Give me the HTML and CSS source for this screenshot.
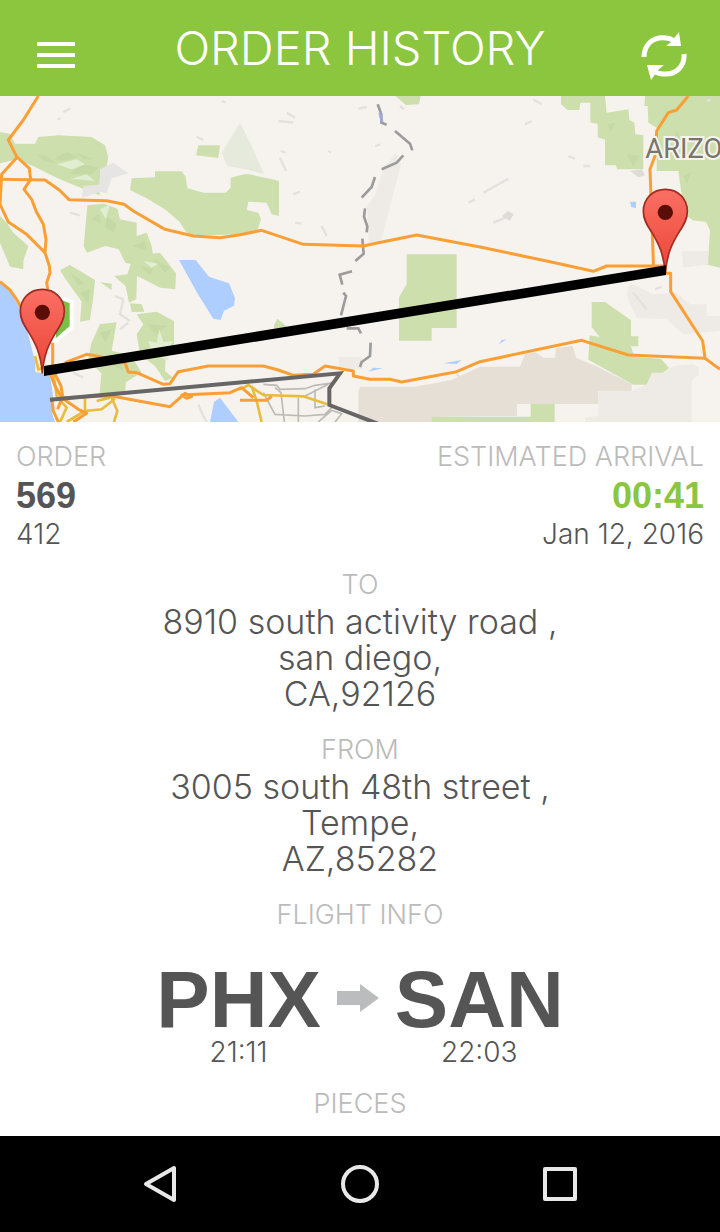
FILE: index.html
```html
<!DOCTYPE html>
<html lang="en">
<head>
    <meta charset="UTF-8">
    <meta name="viewport" content="width=device-width, initial-scale=1.0">
    <title>Order History</title>
    <link rel="stylesheet" href="styles.css">
</head>
<body>
    <header class="topbar">
        <button class="icon-btn" type="button" aria-label="Menu">
            <svg width="38" height="28" viewBox="0 0 38 28"><path d="M0 2h38M0 13h38M0 24h38" stroke="#fff" stroke-width="4"/></svg>
        </button>
        <h1>ORDER HISTORY</h1>
        <button class="icon-btn" type="button" aria-label="Refresh">
            <svg width="46" height="48" viewBox="0 0 46 48">
                <path d="M3 25C3 12 13 4 25 6c4 0 7 2 9 4" fill="none" stroke="#fff" stroke-width="5"/>
                <path d="M38 0l2 14H25l5-4z" fill="#fff"/>
                <path d="M43 22c1 12-8 21-20 20-5 0-8-1-11-4" fill="none" stroke="#fff" stroke-width="5"/>
                <path d="M6 33h17l-6 5-7 10z" fill="#fff"/>
            </svg>
        </button>
    </header>

    <main>
        <svg class="map" viewBox="0 0 2160 978" role="img" aria-label="Flight route map">
            <defs>
                <linearGradient id="pin-fill" x1="0" y1="0" x2="0" y2="1">
                    <stop offset="0" stop-color="#fb7064"/>
                    <stop offset="1" stop-color="#ea4335"/>
                </linearGradient>
                <g id="pin">
                    <path d="M0 0C-5-60-20-88-40-122C-58-148-66-164-66-186C-66-224-38-252 0-252S66-224 66-186C66-164 58-148 40-122C20-88 5-60 0 0z" fill="url(#pin-fill)" stroke="#a02c22" stroke-width="5"/>
                    <circle cy="-183" r="23" fill="#5b0d08"/>
                </g>
            </defs>
            <rect width="2160" height="978" fill="#f6f3ef"/>

            <!-- parks -->
            <g fill="#cddfad">
                <path d="M0 108l30 5 15 30 60 0 10-20 60-5 100 5 40 25 10 35-8 45-18 20v50l-50-20-50-20-40-18-60-30-50-20-49 12z"/>
                <path d="M262 328l50-5 40 15 8 32 50 10v40l30-10 15 40 5 30 20 15-2 30-102-25-20-40-40-10-55 20-10-20z"/>
                <path d="M395 247l70-3v-18h80l12 16 5 35 50 13h65l15-15v-30l40-10h15l70 15 20 5v105l-22-5-15-35-55-3-5 25 35 8 8 20-10 30-40 14-158 6-15-10-22-33-40-35-58-35-50-25z"/>
                <path d="M595 148h65l-5 38-67-8z"/>
                <path d="M0 360l20 20 20 30 45 40-15 45v25l-40-8-30-72z"/>
                <path d="M180 522l30-15 75 45-5 50-10 70-30 5 5-60-50-70z"/>
                <path d="M400 480l80-10 48 62-2 48-45-5-50-25-20-10-2 70-22 10-10-50-35-30 40-5z"/>
                <path d="M390 622l35 3 8 22-38 1zM300 558l35 5v20z"/>
                <path d="M300 684l50-5-15 85 40 10 30 25 20 30-47 30-4 38-75-5 5-60-40-40 10-50z"/>
                <path d="M410 655l60-8 52 28v90l-25 20-2 40 25 20-25 10-30-45-45-35-10-60 20-30z"/>
                <path d="M822 688l10-20 30 25-40 5z"/>
                <path d="M1220 475h150v221h-75v38h-98v-130l23-40zM1187 0h75l-5 25-40 2z"/>
                <path d="M1683 0h132l5 50 65-10 3 32 15 8 3 35 24 2v103h-78l-5-12h-32v-77l-22-7v-40l-22-5V20h-30l-3 22h-35l-20-17z"/>
                <path d="M1935 0h225v515l-50-12 15-20 5-80-12-25-40-5-25-20-18-128h-65V95l-25-15-2-50h-10z"/>
                <path d="M1775 618h40l78 55v48h22v30h-22l10 32 80 5 24 28-25 20-30 3-12 27h-40l-135-75 4-73 30 5-24-30z"/>
            </g>
            <!-- hill shading -->
            <g fill="#b8cf98" opacity=".4">
                <path d="M160 190l40-22 40 14-50 12zM205 235l45-30 45 10-20 20zM110 175l35 8 18 18-30-5zM230 170l50 20-30 0zM275 370l22-18 5 28zM320 360l30 25-10 25-25-18zM400 450l35-15 5 30zM210 530l45 30-20 8zM240 590l30-10-5 45zM420 510l40 10-10 18zM460 490l50 25-15 15zM300 710l35-10-18 38zM330 800l35-15 5 40zM440 685l60 5-30 25zM1825 85l22-5-15 28zM1880 175l40 5-20 30zM2030 100l12 30-22 5zM2085 130l16 10-18 20zM2050 240l25-12-15 35z"/>
            </g>
            <g fill="#e2eed2">
                <path d="M170 205l60-15 25 15-40 15zM210 250l50-15 25 20-55-5zM300 340l30-15-12 45zM430 495l45 8-20 12zM445 735l25 5 8-40 12 38 30-3-18 30 5 30-35-15-35 10 15-32z"/>
            </g>
            <path d="M665 170l55-90 40 80 32 75-55-15-55-10z" fill="#e5eadc"/>

            <!-- plains and desert -->
            <path d="M1150 220l38-50 15 35-55 210-5 22-37 5-5-110 25-37zM1017 783h70v35h-70z" fill="#eeebe6"/>
            <path d="M1080 872h165l110-20 85-40h120l15-38 30-6 25 17 35 0 3-28 50-7 10 35 60 25 107 55v20h-100v39h-243v36h-112l-125 2v16h-240v-90z" fill="#e5dfd5"/>
            <path d="M1552 924h40v38h-40z" fill="#f6f3ef"/>
            <path d="M1795 885h100l48-20 12-35h40l25-20 60-5 17 10v20l-22 20v123h-320v-14l40-4zM1890 560l70 35 70-5 40 35h50v35h40v45l-110 10-50-45-90-5-30-65zM2045 465h80v40l-75 10z" fill="#eeebe6"/>
            <path d="M1295 962h297v-38h72v54h-369z" fill="#cddfad"/>
            <path d="M300 220l40-20 45 32-50 15-15 45-20-5-55 20 5-38 50-3z" fill="#e7e4e4"/>
            <g stroke="#e3e0de" stroke-width="7" fill="none">
                <path d="M190 48l20-10M172 70l10-3M210 350l30 8M590 122l20 10M665 15l12 5M345 600l25 10-10 45 30 20M360 700l25-20M220 830l30 15M595 925l10 25 15 28"/>
                <path d="M835 75l45 5M860 50l25 15M842 165l15 5M840 185l18 40M985 165l8 5M880 295l20-8M885 380l20 2M965 390l15 30M1075 38l25-5M1125 150l15-5M1200 30l12 10M2120 15l12-5M1405 320l20-10M1450 290l75-42M1575 85l20-10M1480 380l60-25M1705 180l20 8M1600 10l25 15M1900 590l40 50M1750 210h20M1965 580l20-8M1205 905l12 35M1370 835l12 10"/>
            </g>
            <path d="M1505 360l20-15 15 10-10 20zM1890 225l35-5 10 18-20 6z" fill="#dedbd8"/>

            <!-- water -->
            <g fill="#aeceff">
                <path d="M0 557l35 35 35 65 20 80 15 60 5 30 40 8 10 70-3 50 8 23H0z"/>
                <path d="M537 492h50l40 50 60 20 18 45-3 22-30 15-10 28-22-4-50-80z"/>
                <path d="M660 905l55 73h-85l12-60zM1105 827l15-12 28 2zM1330 802l55-10-15 12zM1497 745l8-13 15-2zM1890 317h18v20l-14-4z"/>
            </g>

            <!-- interstate shield -->
            <path d="M170 600l45 18 0 75-55 48z" fill="#76c043" stroke="#fff" stroke-width="12"/>
            <path d="M106 775l15-5 10 62-25-4z" fill="#fff2c8"/>

            <!-- state line -->
            <path d="M1133 25l11 30v25l16 6M1185 105l45 38 7 20M1210 178l-20 22-45 20M1125 243l-10 30-30 32M1095 337l-3 25 10 30-2 17M1087 428l4 45-25 22M1056 526l-37 10 8 30M1030 590l8 10-15 58M1040 697h35l8 15M1112 740l-2 40-25 18-5 15" fill="none" stroke="#9c9c9c" stroke-width="8"/>
            <path d="M1140 50l6 28" stroke="#9fa8d8" stroke-width="9"/>

            <!-- city streets -->
            <g fill="none" stroke="#bdbab6" stroke-width="5">
                <path d="M790 865l40 3 10 12 75-2 30-10 60-8M790 890l35 65 90 5 60-5 20-20M825 875l18 15 10 88M895 905v73M915 900l70-35M945 880v55l30-5M955 978l40-35 30 10-20 25"/>
            </g>
            <g fill="none" stroke="#e9bd3c" stroke-width="8">
                <path d="M720 880l25-13 45 30 120 4 72 24M755 870l15 45 15 63M160 830l10 70 30 35-20 43M255 905v40l-55 33M255 945l50-5 40-32M335 905l17 40-10 33M330 905l-40 10M105 780l10 40 35-10"/>
            </g>

            <!-- highways -->
            <g fill="none" stroke="#fa9f35" stroke-width="9" stroke-linejoin="round">
                <path d="M115 0L70 72 25 132l25 50 38 35 4 33-20 30 23 30 13 35 22 40 8 45-3 40 13 40 2 20-10 30 3 20"/>
                <path d="M50 185L5 235 0 325l25 53 55 37 55 55M0 557l30 25 20 28 30 55"/>
                <path d="M0 250l135 2 43 30 29 29 113 3 52 11 28 20 95 55 85 20 80 5 60-9 65-13 125 42 180 5 60-13 100-20 190 36 200 42 140 31 40-16h180"/>
                <path d="M2065 0l-35 42-25 8-35 55-5 75-15 40 10 275v15"/>
                <path d="M1998 532h14v55l96 148 7 52 45 33"/>
                <path d="M2115 787l-230-10-140-44-305 64-70 30-165 31-35-8h-60l-50-10v-15l-85-15-35 25-60 3-45-16-45-12h-165l-90 17-25 36-20 2-80-35-25-2-10-28-85-20-30-5-65 25"/>
                <path d="M158 740v80l25 50 5 30-15 40M150 830l15 40 20 35 50 35 25 12-40 26M155 905l5 40 15 33M185 905l150-5 175 32 45-40 20 10-15 5-15-10 145-7 35-15 35 30M720 913h80l15-12"/>
            </g>

            <path d="M150 911l870-79-32 45v50l145 56" fill="none" stroke="#666" stroke-width="12"/>

            <!-- route -->
            <use href="#pin" x="127" y="832"/>
            <use href="#pin" x="1996" y="532"/>
            <path d="M132 810L1998 508v29L132 840z"/>
            <text class="map-label" x="1936" y="185">ARIZO</text>
        </svg>

        <section class="summary">
            <div>
                <h2>ORDER</h2>
                <p class="value">569</p>
                <p class="detail">412</p>
            </div>
            <div class="arrival">
                <h2>ESTIMATED ARRIVAL</h2>
                <p class="value eta">00:41</p>
                <p class="detail">Jan 12, 2016</p>
            </div>
        </section>

        <section class="block">
            <h2>TO</h2>
            <address>8910 south activity road ,<br>san diego,<br>CA,92126</address>
        </section>
        <section class="block">
            <h2>FROM</h2>
            <address>3005 south 48th street ,<br>Tempe,<br>AZ,85282</address>
        </section>
        <section class="block">
            <h2>FLIGHT INFO</h2>
            <div class="flight">
                <div>
                    <p class="airport">PHX</p>
                    <p class="time">21:11</p>
                </div>
                <svg class="arrow" width="42" height="28" viewBox="0 0 42 28"><path d="M0 7h23V0l19 14-19 14v-7H0z" fill="#bbbcbe"/></svg>
                <div>
                    <p class="airport">SAN</p>
                    <p class="time">22:03</p>
                </div>
            </div>
        </section>
        <section class="block">
            <h2>PIECES</h2>
        </section>
    </main>

    <nav class="navbar">
        <button type="button" aria-label="Back">
            <svg width="40" height="40" viewBox="0 0 40 40"><path d="M34 4v32L6 20z"/></svg>
        </button>
        <button type="button" aria-label="Home">
            <svg width="40" height="40" viewBox="0 0 40 40"><circle cx="20" cy="20" r="17"/></svg>
        </button>
        <button type="button" aria-label="Recent apps">
            <svg width="40" height="40" viewBox="0 0 40 40"><path d="M5 5h30v30H5z"/></svg>
        </button>
    </nav>
</body>
</html>
```

FILE: styles.css
```css
* {
    box-sizing: border-box;
}

body {
    margin: 0;
    min-height: 100vh;
    display: flex;
    flex-direction: column;
    background-color: #fff;
    color: #555;
    font-family: Inter, "Liberation Sans", sans-serif;
    font-weight: 300;
}

h1, h2, p {
    margin: 0;
    font-weight: 300;
}

button {
    padding: 0;
    border: 0;
    background: none;
    cursor: pointer;
}

svg {
    display: block;
}

.topbar {
    display: flex;
    align-items: center;
    justify-content: space-between;
    height: 96px;
    padding: 0 32px;
    background-color: #8cc63f;
    color: #fff;
}

.topbar h1 {
    font-size: 47px;
    line-height: 96px;
}

.icon-btn {
    display: flex;
    justify-content: center;
    width: 48px;
    padding-top: 16px;
}

main {
    flex: 1;
}

.map {
    width: 100%;
    height: auto;
}

.map-label {
    font: 400 82px Roboto, sans-serif;
    fill: #77766b;
    stroke: #f6f3ef;
    stroke-width: 12px;
    paint-order: stroke;
}

h2 {
    color: #bbb;
    font-size: 27px;
    line-height: 39px;
}

.summary {
    display: flex;
    justify-content: space-between;
    padding: 15px 16px 0;
}

.arrival {
    text-align: right;
}

.value {
    font: bold 36px/39px "Liberation Sans", Arial, sans-serif;
}

.eta {
    color: #8cc63f;
}

.detail {
    font-size: 28px;
    line-height: 39px;
}

.block {
    margin-top: 18px;
    text-align: center;
}

.summary + .block {
    margin-top: 11px;
}

address {
    font-size: 34px;
    font-style: normal;
    line-height: 36px;
}

.flight {
    display: flex;
    justify-content: center;
    gap: 16px;
    padding-top: 28px;
}

.airport {
    font: bold 80px/76px "Liberation Sans", Arial, sans-serif;
}

.time {
    font-size: 28px;
    line-height: 28px;
}

.arrow {
    margin-top: 22px;
}

.navbar {
    display: flex;
    align-items: center;
    justify-content: center;
    gap: 160px;
    height: 96px;
    background-color: #000;
}

.navbar svg {
    fill: none;
    stroke: #e8e8e8;
    stroke-width: 4;
    stroke-linejoin: round;
}
```
